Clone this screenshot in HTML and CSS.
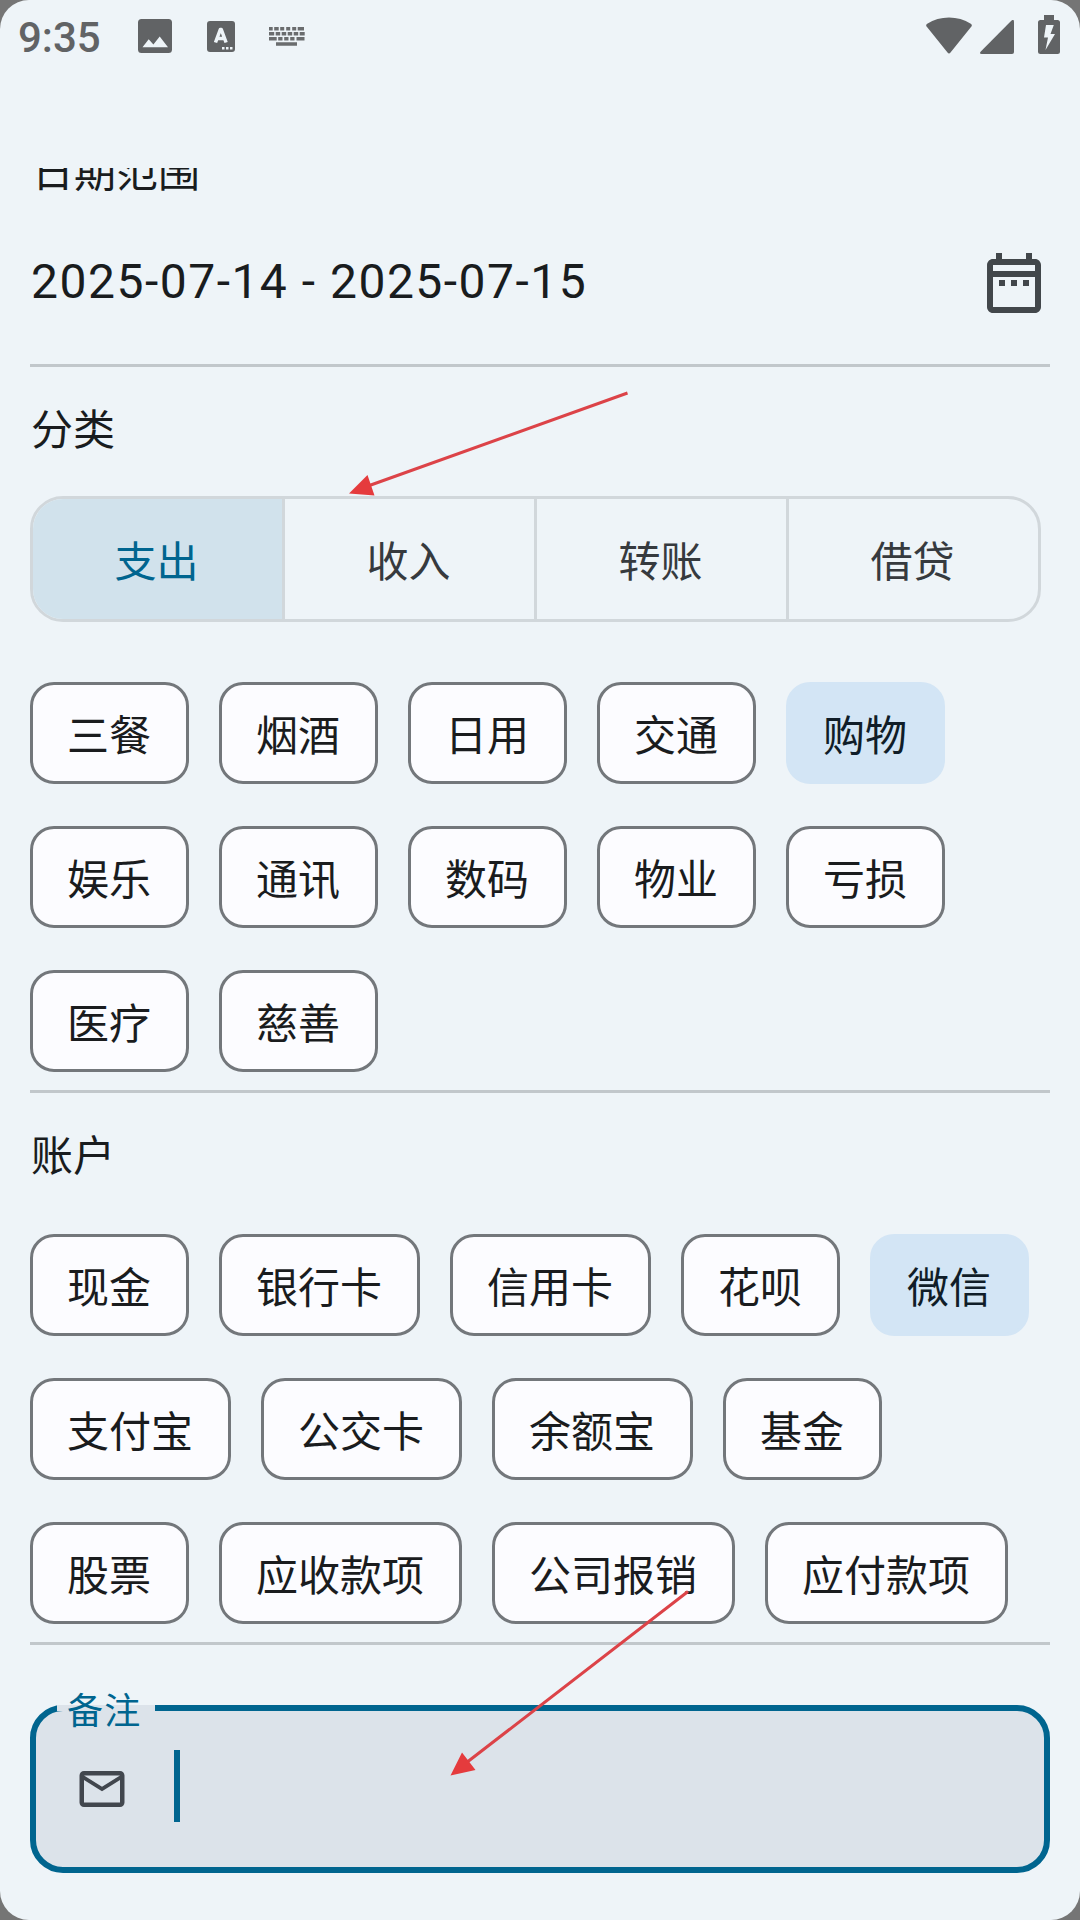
FILE: index.html
```html
<!DOCTYPE html>
<html lang="zh-CN">
<head>
<meta charset="utf-8">
<title>筛选</title>
<link rel="stylesheet" href="styles.css">
</head>
<body>
<main class="screen">
  <header class="status">
    <span class="clock">9:35</span>
    <svg class="icon-image" viewBox="0 0 34 34"><path fill-rule="evenodd" d="M3.500 0h27A3.500 3.500 0 0 1 34 3.500v27a3.500 3.500 0 0 1-3.500 3.500h-27A3.500 3.500 0 0 1 0 30.500v-27A3.500 3.500 0 0 1 3.500 0zM4.500 28.300h25.500L21.700 17.500l-6.300 8-4.700-5.300z"/></svg>
    <svg class="icon-lang" viewBox="0 0 28 31"><rect width="28" height="31" rx="3"/><path class="cut-line" d="M8.500 21.500 13.300 8.500h1l4.800 13M10.500 17.500h6.500"/><path class="cut" d="M15 26h2.500v2.500H15zM19 26h2.500v2.500H19zM23 26h2.500v2.500H23z"/></svg>
    <svg class="icon-keys" viewBox="0 0 36 19"><path class="key-line" d="M0 1.700h3.700m1.500 0h4.500m1.500 0h4m2 0h4m2 0h4m1.500 0h6.300M0 6.700h5.200m1.500 0h4.500m1.500 0h4.500m1.500 0h4.500m1.500 0h4.500m1.500 0h5M0 11.700h7.700m1.500 0h4.300m1.700 0h4.300m1.700 0h4.300m2 0h8M7 17h21"/></svg>
    <span class="spacer"></span>
    <svg class="icon-wifi" viewBox="0 0 46 37"><path d="M1 10Q-.8 8.300 1.200 6.800 11 .5 23 .5t21.800 6.300Q46.800 8.300 45 10L24.500 35.500q-1.500 1.800-3 0z"/></svg>
    <svg class="icon-signal" viewBox="0 0 34 34"><path d="M31.300.8Q34-1.500 34 2v30q0 2-2 2H1.700Q-1.200 34 .8 31.500z"/></svg>
    <svg class="icon-battery" viewBox="0 0 22 39"><path fill-rule="evenodd" d="M6 0h10v5h3.500A2.500 2.500 0 0 1 22 7.500v29a2.500 2.500 0 0 1-2.500 2.500h-17A2.500 2.500 0 0 1 0 36.500v-29A2.500 2.500 0 0 1 2.500 5H6zM8 10 6 22.500h4L7.500 35 17 19h-4.500L15.800 10z"/></svg>
  </header>

  <section class="content">
    <h2 class="title title-date">日期范围</h2>
    <div class="date-row">
      <span class="date">2025-07-14 - 2025-07-15</span>
      <svg class="icon-calendar" viewBox="0 0 24 24"><path d="M7 11h2v2H7v-2zm14-5v14c0 1.100-.9 2-2 2H5c-1.110 0-2-.9-2-2l.01-14c0-1.100.88-2 1.990-2h1V2h2v2h8V2h2v2h1c1.100 0 2 .9 2 2zM5 8h14V6H5v2zm14 12V10H5v10h14zm-4-7h2v-2h-2v2zm-4 0h2v-2h-2v2z"/></svg>
    </div>
    <hr class="rule">

    <h2 class="title">分类</h2>
    <div class="tabs">
      <span class="tab tab-on">支出</span>
      <span class="tab">收入</span>
      <span class="tab">转账</span>
      <span class="tab">借贷</span>
    </div>
    <div class="chips">
      <span class="chip">三餐</span><span class="chip">烟酒</span><span class="chip">日用</span><span class="chip">交通</span><span class="chip chip-on">购物</span>
      <span class="chip">娱乐</span><span class="chip">通讯</span><span class="chip">数码</span><span class="chip">物业</span><span class="chip">亏损</span>
      <span class="chip">医疗</span><span class="chip">慈善</span>
    </div>
    <hr class="rule">

    <h2 class="title">账户</h2>
    <div class="chips chips-account">
      <span class="chip">现金</span><span class="chip">银行卡</span><span class="chip">信用卡</span><span class="chip">花呗</span><span class="chip chip-on">微信</span>
      <span class="chip">支付宝</span><span class="chip">公交卡</span><span class="chip">余额宝</span><span class="chip">基金</span>
      <span class="chip">股票</span><span class="chip">应收款项</span><span class="chip">公司报销</span><span class="chip">应付款项</span>
    </div>
    <hr class="rule">

    <div class="field">
      <span class="field-label">备注</span>
      <svg class="icon-mail" viewBox="0 0 24 24"><path d="M22 6c0-1.100-.9-2-2-2H4c-1.100 0-2 .9-2 2v12c0 1.100.9 2 2 2h16c1.100 0 2-.9 2-2V6zm-2 0-8 5-8-5h16zm0 12H4V8l8 5 8-5v10z"/></svg>
      <span class="caret"></span>
    </div>
  </section>

  <svg class="arrows" viewBox="0 0 1080 1920">
    <path class="shaft" d="M627.500 393 368 486M688 1591.500 466 1763"/>
    <path d="M349 493.500 367.500 475l7 20.500zM450.500 1775.500l11.500-23 13.500 17.500z"/>
  </svg>
</main>
</body>
</html>
```
FILE: styles.css
```css
* { box-sizing: border-box; }

body {
  margin: 0;
  background: #757575;
  font-family: Roboto, "Noto Sans CJK SC", sans-serif;
  color: #191c1e;
}

svg { display: block; flex: none; }

.screen {
  position: relative;
  width: 1080px;
  height: 1920px;
  overflow: hidden;
  border-radius: 29px;
  background: #eef4f8;
}

.status {
  display: flex;
  align-items: flex-start;
  height: 168px;
  padding: 15px 20px 0 18px;
  fill: #616365;
}

.clock {
  width: 120px;
  margin-top: 2px;
  font-size: 42px;
  font-weight: 500;
  line-height: 42px;
  color: #616365;
}

.spacer { flex: 1; }
.icon-image { width: 34px; height: 34px; margin-top: 4px; }
.icon-lang { width: 28px; height: 31px; margin: 6px 0 0 35px; }
.icon-keys { width: 36px; height: 19px; margin: 12px 0 0 34px; }
.icon-wifi { width: 46px; height: 37px; margin: 2px 8px 0 0; }
.icon-signal { width: 34px; height: 34px; margin: 5px 24px 0 0; }
.icon-battery { width: 22px; height: 39px; }
.cut { fill: #eef4f8; }
.cut-line { fill: none; stroke: #eef4f8; stroke-width: 3.5; stroke-linejoin: round; }
.key-line { fill: none; stroke: #6a6c6e; stroke-width: 3.5; }

.content {
  height: 1752px;
  padding: 0 30px;
  overflow: hidden;
}

.title {
  height: 129px;
  margin: 0;
  padding: 34px 0 0 1px;
  font-size: 42px;
  font-weight: 400;
  line-height: 60px;
}

.title-date {
  height: 60px;
  margin-top: -25px;
  padding: 0 0 0 2px;
}

.date-row {
  display: flex;
  align-items: center;
  justify-content: space-between;
  height: 161px;
  padding-bottom: 1px;
}

.date {
  padding: 0 0 4px 1px;
  font-size: 48px;
  letter-spacing: 1.5px;
}

.icon-calendar { width: 72px; height: 72px; fill: #42474b; }

.rule {
  height: 3px;
  margin: 0;
  border: 0;
  background: #c1c7cb;
}

.tabs {
  display: flex;
  width: 1011px;
  height: 126px;
  overflow: hidden;
  border: 3px solid #d1d7db;
  border-radius: 33px;
}

.tab {
  flex: 1;
  padding: 34px 2px 0 0;
  font-size: 42px;
  line-height: 60px;
  text-align: center;
  color: #363a3e;
}

.tab + .tab { border-left: 3px solid #d1d7db; }
.tab-on { background: #d1e2ec; color: #00658f; }

.chips {
  display: flex;
  flex-wrap: wrap;
  gap: 42px 30px;
  padding: 60px 0 18px;
}

.chips-account { padding-top: 12px; }

.chip {
  height: 102px;
  padding: 22px 35px 0 34px;
  border: 3px solid #73777b;
  border-radius: 24px;
  background: #fcfcff;
  font-size: 42px;
  line-height: 60px;
  color: #1a1c1e;
}

.chip-on {
  border-color: #d3e5f5;
  background: #d3e5f5;
  color: #101d28;
}

.field {
  position: relative;
  display: flex;
  align-items: center;
  height: 168px;
  margin-top: 60px;
  padding-left: 39px;
  border: 6px solid #00658f;
  border-radius: 33px;
  background: #dce3ea;
}

.field-label {
  position: absolute;
  top: -25px;
  left: 21px;
  width: 98px;
  padding-left: 10px;
  background: linear-gradient(#dce3ea, #dce3ea) 0 19px / 100% 6px no-repeat;
  font-size: 36px;
  line-height: 52px;
  letter-spacing: 1.2px;
  color: #00658f;
}

.icon-mail { width: 54px; height: 54px; fill: #42474e; }
.caret { width: 6px; height: 72px; margin: 0 0 6px 45px; background: #00658f; }

.arrows {
  position: absolute;
  inset: 0;
  fill: #e53b3d;
}

.shaft { fill: none; stroke: #dc4348; stroke-width: 3; }
```
